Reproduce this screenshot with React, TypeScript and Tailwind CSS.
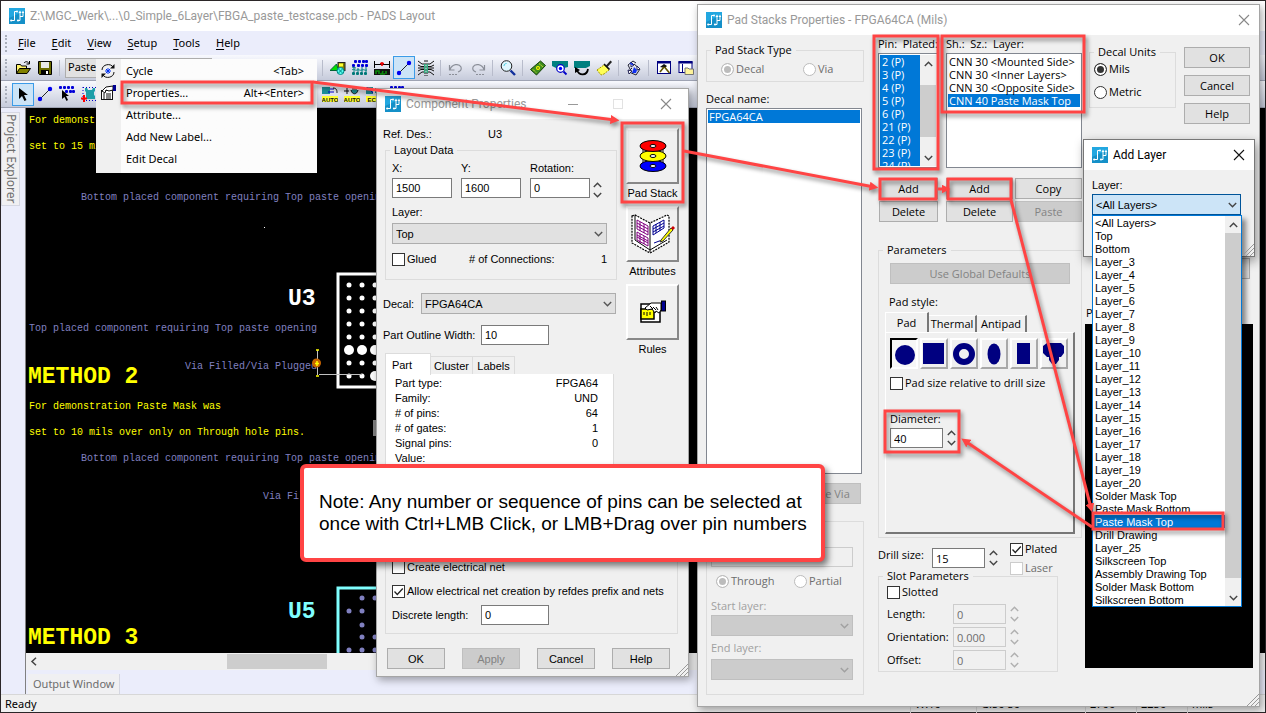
import type { ReactNode } from "react";
import clsx from "clsx";

/* ---------- Icons ---------- */

function Svg({ size = 16, children }: { size?: number; children: ReactNode }) {
  return (
    <svg width={size} height={size} viewBox="0 0 16 16" fill="none" className="shrink-0" aria-hidden="true">
      {children}
    </svg>
  );
}

function AppLogo() {
  return (
    <Svg>
      <rect width="16" height="16" fill="#22a7e0" />
      <path d="M0 16V10L16 3v13z" fill="#1590c8" />
      <path d="M2 12.5h3.500V3.500H8M9 12.500h2V5M11 8.500h3V5" stroke="#fff" />
      <circle cx="8" cy="3.500" r="1" fill="#fff" />
      <circle cx="2.200" cy="12.500" r="1.100" fill="#fff" />
      <circle cx="9" cy="12.500" r="1.100" fill="#fff" />
      <path d="M11 2.500L9.500 5h3zM14 2.500L12.700 5h2.600z" fill="#fff" />
    </Svg>
  );
}

function Chevron({ up, color = "#444", size = 9 }: { up?: boolean; color?: string; size?: number }) {
  return (
    <svg width={size} height="6" viewBox="0 0 9 6" fill="none" aria-hidden="true">
      <path d={up ? "M.8 5L4.5 1.3 8.2 5" : "M.8 1l3.7 3.7L8.2 1"} stroke={color} strokeWidth="1.4" />
    </svg>
  );
}

function CloseIcon({ color }: { color: string }) {
  return (
    <svg width="12" height="12" viewBox="0 0 12 12" fill="none" aria-hidden="true">
      <path d="M1 1l10 10M11 1L1 11" stroke={color} strokeWidth="1.1" />
    </svg>
  );
}

const dots = (cols: number[], rows: number[], color: string) =>
  rows.flatMap((y) => cols.map((x) => <rect key={`${x}-${y}`} x={x} y={y} width="3" height="3" rx="1" fill={color} />));

const auto = (label: string) => (
  <text x="8" y="15.5" textAnchor="middle" fontSize="6" fontWeight="700" fontFamily="Liberation Sans, sans-serif" fill="#111">
    {label}
  </text>
);

const icons: Record<string, ReactNode> = {
  open: (
    <>
      <path d="M1.5 13.5v-9h4l1 1.5h5v3" fill="#fff36b" stroke="#000" />
      <path d="M1.5 13.5L4.5 8.5h11l-3.5 5z" fill="#808000" stroke="#000" />
      <path d="M9 3c1.500-2 4-1.500 5 .5M14.500 1v3h-3" stroke="#000" />
    </>
  ),
  save: (
    <>
      <path d="M1.500 1.500h13v13h-12l-1-1z" fill="#6b6b00" stroke="#000" />
      <rect x="4" y="2" width="8" height="6" fill="#e8e8e8" />
      <rect x="4" y="10" width="8" height="4.500" fill="#000" />
      <rect x="9" y="11" width="2" height="3" fill="#fff" />
    </>
  ),
  shapes: (
    <>
      <rect x="8" y="2.500" width="7" height="8" fill="#808000" stroke="#222" />
      <rect x="9" y="3.500" width="4" height="3" fill="#ff3" />
      <path d="M0 10.500L6.500 4l2 6.500z" fill="#00e000" stroke="#063" />
      <circle cx="10.500" cy="11" r="3.500" fill="#5fe" stroke="#088" />
      <path d="M8.500 9l4 4M12.500 9l-4 4" stroke="#088" />
    </>
  ),
  dots: (
    <>
      {dots([2, 6, 10, 13], [0], "#0000d8")}
      {dots([0, 5, 9, 13], [4], "#0000d8")}
      {dots([0, 4, 8, 12], [12], "#007878")}
      <path d="M0 7l4 1M0 10c2-2 3 1 5 0s3 1 5 0 3 1 5 0M2 8v4M6 8v4M10 7v5M14 7v5" stroke="#008080" />
    </>
  ),
  measure: (
    <>
      <path d="M.5 1v7M15.500 1v7M0 4.500h16" stroke="#000" />
      <path d="M8 2v4M6 3.500h4" stroke="#e00" strokeWidth="1.600" />
      <rect x="0" y="9" width="16" height="6" fill="#111" />
      <path d="M2 14v-3h3v3M8 14l1-3M12 11v3M6 14h5" stroke="#0a8a0a" strokeWidth="1.600" />
    </>
  ),
  track: (
    <>
      <path d="M3 13L13 3" stroke="#222" />
      <circle cx="3" cy="13" r="2.200" fill="#0000f0" />
      <circle cx="13" cy="3" r="2.200" fill="#0000f0" />
    </>
  ),
  fanout: (
    <>
      <path d="M0 1l4 3h2M0 5l3 1.500h3M0 8h6M0 11l3-1.500h3M0 15l4-3h2M16 1l-4 3h-2M16 5l-3 1.500h-3M16 8h-6M16 11l-3-1.500h-3M16 15l-4-3h-2" stroke="#111" />
      <path d="M7 0v16M9 0v16" stroke="#111" strokeDasharray="2 1" />
      <rect x="6" y="4" width="1.500" height="9" fill="#30b080" />
      <rect x="8.500" y="4" width="1.500" height="9" fill="#30b080" />
    </>
  ),
  undo: (
    <>
      <path d="M1.500 5v5h5M2 9.500C4 4 11 3 13 7c1 3-1 4.500-3 5" stroke="#8b8f99" strokeWidth="1.200" />
      <path d="M1 14.500h9" stroke="#8b8f99" strokeDasharray="2 1" />
    </>
  ),
  redo: (
    <>
      <path d="M14.500 5v5h-5M14 9.500C12 4 5 3 3 7c-1 3 1 4.500 3 5" stroke="#8b8f99" strokeWidth="1.200" />
      <path d="M6 14.500h9" stroke="#8b8f99" strokeDasharray="2 1" />
    </>
  ),
  zoom: (
    <>
      <path d="M10.500 10.500l4.500 4.500" stroke="#12309b" strokeWidth="2.400" />
      <circle cx="6.500" cy="6" r="5.300" fill="#dff7ff" stroke="#222" />
      <path d="M4 6c0-1.500 1-2.500 2.500-2.500" stroke="#4cd" />
    </>
  ),
  board: (
    <>
      <path d="M.5 9.500L10.500 1l5 4.500-9 9.500z" fill="#3f8f1e" stroke="#143f0a" />
      <path d="M3 9.500l3 3M9 3.500l4 3.500" stroke="#e8e23c" strokeDasharray="2 1" />
      <circle cx="8" cy="8" r="2" fill="#ff0" />
      <circle cx="8" cy="8" r=".8" fill="#143f0a" />
    </>
  ),
  view: (
    <>
      <path d="M0 1h16v6l-4 1H4L0 6z" fill="#008080" />
      <circle cx="8.500" cy="8.500" r="3.800" fill="#fff" stroke="#0000c8" strokeWidth="1.200" />
      <circle cx="8.500" cy="8.500" r="1.700" fill="#00f" />
      <path d="M11.500 11.500l3 3" stroke="#0000c8" strokeWidth="1.800" />
    </>
  ),
  redraw: (
    <>
      <path d="M0 1h16v5l-4 2H0z" fill="#008080" />
      <path d="M3 10c2 6 10 6 11-1" stroke="#000" strokeWidth="1.800" />
      <path d="M1 13V7l5 3z" fill="#000" />
    </>
  ),
  brush: (
    <>
      <path d="M10 5.500l4.500-5 1.500 1.500-4.500 5z" fill="#222" />
      <path d="M1 10l7-5 5 5-5 4-3 1z" fill="#ffff55" stroke="#a89b00" strokeDasharray="2 1" />
      <path d="M8 4l5.500 5.500" stroke="#111" strokeWidth="1.600" />
    </>
  ),
  cluster: (
    <>
      <path d="M2 5l5-4 3 2M14 9l-4 6-7-3M2 5l3 6M8 4l6 5M6 8l-4 4" stroke="#223" />
      <path d="M5 2l3 3-3 2zM11 6l3 3-3 1zM2 10l4 1-3 3z" fill="#fff" stroke="#225" />
      <path d="M8 7l3 3-1 3H6z" fill="#1030f0" />
      <path d="M4 3l3 2" stroke="#1030f0" strokeWidth="1.500" />
    </>
  ),
  hammer: (
    <>
      <rect x="1.500" y="1.500" width="13" height="12" fill="#fff" stroke="#000080" />
      <path d="M1 2.500h14" stroke="#000080" strokeWidth="2" />
      <path d="M4 7l4-3 3 2-2 2z" fill="#111" />
      <path d="M8.500 7l5 6M8 7l-4 5" stroke="#5f5300" strokeWidth="1.600" />
    </>
  ),
  windowIcon: (
    <>
      <rect x="1" y="1.500" width="13" height="11" fill="#fff" stroke="#000080" />
      <path d="M.5 2.500h14" stroke="#000080" strokeWidth="2" />
      <path d="M4.500 4v9" stroke="#000080" />
      <path d="M7 8h3l1 1h4.500v5.500H7z" fill="#fff49b" stroke="#777" />
    </>
  ),
  select: <path d="M4 2v11l3-3 2.500 5 2-1-2.500-5h4z" fill="#000" />,
  selectDots: (
    <>
      {dots([0, 4, 8, 12], [0], "#0000d8")}
      {dots([6, 10, 13], [4], "#0000d8")}
      <path d="M3 4v9l2.500-2 2 4 1.500-1-2-4h3z" fill="#000" />
    </>
  ),
  addPart: (
    <>
      <path d="M4 2h2l1 2h4l1-2h2v3l-1 1v3l1 1v3H5V6L4 5z" fill="#1d9fa8" />
      <path d="M2 1v13M15.500 1v13M2 1.500h14M5 14.500h11" stroke="#0000c8" strokeDasharray="1 2" />
      <path d="M3 9v7M0 12.500h6" stroke="#f00" strokeWidth="2" />
    </>
  ),
  autoPlace: (
    <>
      <path d="M0 1h8v7H0z" fill="#1d8f98" />
      <path d="M8 3h4M6 6h6" stroke="#00c" />
      <path d="M11 2c4 0 4 3 4 5" stroke="#111" />
      <rect x="0" y="10" width="16" height="6" fill="#ffff30" />
      {auto("AUTO")}
    </>
  ),
  autoRoute: (
    <>
      <path d="M0 5h5M3 2v6M8 3h5" stroke="#111" />
      <path d="M7 4c1 5 6 5 7 0" fill="#1d8f98" stroke="#111" />
      <rect x="0" y="10" width="16" height="6" fill="#ffff30" />
      {auto("AUTO")}
    </>
  ),
  eco: (
    <>
      <path d="M0 1h7v7H0zM9 2h5v5H9z" fill="#1d8f98" />
      <path d="M1 1l6 6" stroke="#00c" />
      <rect x="0" y="10" width="16" height="6" fill="#ffff30" />
      {auto("ECO")}
    </>
  ),
  cycle: (
    <>
      <path d="M2 7c0-6 9-7 11-3M14 9c0 6-9 7-11 3" stroke="#111" />
      <path d="M14.500 1v4.500H10zM1.500 15v-4.500H6z" fill="#111" />
      <path d="M8 5v6M5 8h6M6 6l4 4M10 6l-4 4" stroke="#0030f0" />
    </>
  ),
  properties: (
    <>
      <rect x="1.500" y="5.500" width="11" height="9" fill="#fff" stroke="#111" />
      <path d="M3 9h2M6 9h5M3 11h2M6 11h5M3 13h2M6 13h5" stroke="#111" />
      <path d="M2 6l4-4 7-1v4l-4 1-3-1-1 3z" fill="#fff" stroke="#111" />
      <rect x="13" y="0" width="3" height="6" fill="#000090" />
    </>
  ),
};

function Icon({ name }: { name: string }) {
  return <Svg>{icons[name]}</Svg>;
}

function DiscsIcon() {
  return (
    <svg width="30" height="34" viewBox="0 0 30 34" aria-hidden="true">
      <path d="M5 6v21M25 6v21" stroke="#111" />
      {[
        ["#00f", 27],
        ["#ff0", 17],
        ["#f00", 7],
      ].map(([color, y]) => (
        <g key={color} stroke="#000">
          <ellipse cx="15" cy={y} rx="13" ry="5.500" fill={color as string} />
          <ellipse cx="15" cy={y} rx="3" ry="1.500" fill="#fff" />
        </g>
      ))}
    </svg>
  );
}

function BookIcon() {
  return (
    <svg width="44" height="40" viewBox="0 0 44 40" fill="none" aria-hidden="true">
      <path d="M1 2l3-1 15 8L36 1l2 1v26L19 39 1 29z" fill="#fff" stroke="#000" strokeWidth="1.200" strokeDasharray="2 1" />
      <path d="M19 9v29M4 1v25l15 10 17-10" stroke="#000" />
      <path d="M6 6l11 6v9L6 15zM6 18l11 6v8L6 26zM6 9l11 6M6 12l11 6M6 21l11 6M6 23l11 6M9 8v9M13 10v9M9 20v9M13 22v8" stroke="#800080" />
      <path d="M22 12l11-6v8l-11 7zM22 15l11-6M22 18l11-6M25 10v9M29 8v9M23 29l8-3" stroke="#000090" />
      <path d="M30 26l10-12 2 2-10 11-3 1z" fill="#ff0" stroke="#333" />
      <path d="M40 14l2-2 2 2-2 2z" fill="#c00" />
    </svg>
  );
}

function RulesIcon() {
  return (
    <svg width="26" height="24" viewBox="0 0 26 24" fill="none" aria-hidden="true">
      <path d="M1 4h19v18H1z" fill="#fff" stroke="#000" strokeWidth="1.500" />
      <rect x="1" y="9" width="13" height="10" fill="#ff0" stroke="#000" strokeWidth="1.500" />
      <path d="M4 12v3M7 12v4M10 12v3" stroke="#000" />
      <path d="M5 8l6-5h10v7l-2 3-3-2-1 2-3-4-5 1z" fill="#fff" stroke="#000" />
      <path d="M10 6l3 3M13 7l3 3M16 7l2 3" stroke="#000" />
      <rect x="21.500" y="1" width="4" height="10" fill="#000090" stroke="#000" />
    </svg>
  );
}

/* ---------- Controls ---------- */

function Button({ children, disabled, className }: { children?: ReactNode; disabled?: boolean; className?: string }) {
  return (
    <button
      type="button"
      disabled={disabled}
      className={clsx(
        "flex h-[21px] items-center justify-center border",
        disabled ? "border-[#bfbfbf] bg-[#cccccc] text-[#838383]" : "border-[#adadad] bg-[#e1e1e1]",
        className,
      )}
    >
      {children}
    </button>
  );
}

function TextBox({ id, value, label, disabled, className }: { id?: string; value: string; label?: string; disabled?: boolean; className?: string }) {
  return (
    <input
      id={id}
      type="text"
      aria-label={label}
      defaultValue={value}
      disabled={disabled}
      className={clsx(
        "h-5 min-w-0 border px-[3px]",
        disabled ? "border-[#cccccc] bg-[#f0f0f0] text-[#6d6d6d]" : "border-[#7a7a7a] bg-white",
        className,
      )}
    />
  );
}

function Combo({ id, value, disabled, className }: { id: string; value?: string; disabled?: boolean; className?: string }) {
  return (
    <div className={clsx("relative", className)}>
      <select
        id={id}
        disabled={disabled}
        className={clsx(
          "block h-[21px] w-full appearance-none border pl-[3px]",
          disabled ? "border-[#bfbfbf] bg-[#cccccc]" : "border-[#adadad] bg-[#e1e1e1]",
        )}
      >
        <option>{value}</option>
      </select>
      <span className="pointer-events-none absolute right-1 top-2">
        <Chevron color={disabled ? "#a0a0a0" : "#555"} />
      </span>
    </div>
  );
}

function Check({ label, checked, disabled }: { label: string; checked?: boolean; disabled?: boolean }) {
  return (
    <label className={clsx("flex h-3.5 items-center gap-0.5", disabled && "text-[#6d6d6d]")}>
      <span className="relative size-[13px]">
        <input
          type="checkbox"
          defaultChecked={checked}
          disabled={disabled}
          className="block size-[13px] appearance-none border border-[#333] bg-white disabled:border-[#cccccc]"
        />
        {checked && (
          <svg className="pointer-events-none absolute inset-0" width="13" height="13" viewBox="0 0 13 13" fill="none">
            <path d="M2.500 6.500l2.800 3L10.800 3.500" stroke="#222" strokeWidth="1.300" />
          </svg>
        )}
      </span>
      {label}
    </label>
  );
}

function Radio({ name, label, checked, disabled }: { name: string; label: string; checked?: boolean; disabled?: boolean }) {
  return (
    <label className={clsx("flex h-3.5 items-center gap-0.5", disabled && "text-[#6d6d6d]")}>
      <input
        type="radio"
        name={name}
        defaultChecked={checked}
        disabled={disabled}
        className="size-[13px] appearance-none rounded-full border border-[#333] bg-white checked:bg-[#333] checked:shadow-[inset_0_0_0_2px_white] disabled:border-[#bcbcbc] disabled:checked:bg-[#bcbcbc]"
      />
      {label}
    </label>
  );
}

function Spinner({ disabled }: { disabled?: boolean }) {
  return (
    <span className="flex flex-col gap-1">
      <button type="button" aria-label="Increase" disabled={disabled}>
        <Chevron up color={disabled ? "#b0b0b0" : "#444"} />
      </button>
      <button type="button" aria-label="Decrease" disabled={disabled}>
        <Chevron color={disabled ? "#b0b0b0" : "#444"} />
      </button>
    </span>
  );
}

function Group({ title, className, bodyClass, children }: { title?: string; className?: string; bodyClass?: string; children: ReactNode }) {
  return (
    <fieldset className={clsx("min-w-0 border border-[#dcdcdc]", className)}>
      {title && <legend className="ml-1 h-3.5 px-1">{title}</legend>}
      <div className={bodyClass}>{children}</div>
    </fieldset>
  );
}

function ScrollTrack({ thumb }: { thumb: string }) {
  return (
    <div className="flex w-4 shrink-0 flex-col items-center bg-[#f0f0f0]">
      <span className="flex h-[17px] shrink-0 items-center">
        <Chevron up />
      </span>
      <div className="flex w-full flex-1 flex-col">
        <div className={clsx("w-full bg-[#cdcdcd]", thumb)} />
      </div>
      <span className="flex h-[17px] shrink-0 items-center">
        <Chevron />
      </span>
    </div>
  );
}

function ResizeGrip() {
  return (
    <svg className="absolute bottom-0 right-0" width="12" height="12" viewBox="0 0 12 12" aria-hidden="true">
      <path d="M0 12L12 0M4 12l8-8M8 12l4-4" stroke="#999" />
    </svg>
  );
}

function DialogTitle({ title, active, children }: { title: string; active?: boolean; children?: ReactNode }) {
  return (
    <header
      className={clsx(
        "flex h-[30px] shrink-0 items-center gap-[5px] bg-white px-2 font-[Roboto,'Open_Sans',sans-serif] text-[12px]",
        active ? "text-black" : "text-[#999999]",
      )}
    >
      <AppLogo />
      <h2 className="flex-1 whitespace-nowrap">{title}</h2>
      {children}
      <button type="button" aria-label="Close" className={children ? "mr-2" : "mr-px"}>
        <CloseIcon color={active ? "#111" : "#888"} />
      </button>
    </header>
  );
}

/* ---------- Main window ---------- */

function ToolButton({ name, active }: { name: string; active?: boolean }) {
  return (
    <button
      type="button"
      aria-label={name}
      className={clsx("flex h-[21px] w-5 shrink-0 items-center justify-center", active && "bg-[#cce4f7] outline outline-[#3b9be8]")}
    >
      <Icon name={name} />
    </button>
  );
}

function Grip() {
  return <span className="ml-1 mr-1 h-[17px] w-0 shrink-0 border-l-2 border-dotted border-[#a9aebb]" />;
}

function Separator() {
  return <span className="ml-0.5 mr-[3px] h-4 w-px shrink-0 bg-[#b8bccb]" />;
}

const menus = ["File", "Edit", "View", "Setup", "Tools", "Help"];

function Toolbars() {
  return (
    <>
      <div className="flex h-[26px] shrink-0 items-center gap-0.5 border-b border-[#9ea3b3] bg-linear-to-b from-[#f8f9fe] to-[#c6cbdb]">
        <Grip />
        <ToolButton name="open" />
        <ToolButton name="save" />
        <Separator />
        <select aria-label="Layer" className="h-5 w-[147px] shrink-0 appearance-none border border-[#adadad] bg-[#e1e1e1] pl-0.5 text-[11px]">
          <option>Paste Mask Top</option>
        </select>
        <span className="w-[104px] shrink-0" />
        <Separator />
        <ToolButton name="shapes" />
        <ToolButton name="dots" />
        <ToolButton name="measure" />
        <ToolButton name="track" active />
        <ToolButton name="fanout" />
        <Separator />
        <ToolButton name="undo" />
        <ToolButton name="redo" />
        <Separator />
        <ToolButton name="zoom" />
        <Separator />
        <ToolButton name="board" />
        <ToolButton name="view" />
        <ToolButton name="redraw" />
        <ToolButton name="brush" />
        <Separator />
        <ToolButton name="cluster" />
        <Separator />
        <ToolButton name="hammer" />
        <ToolButton name="windowIcon" />
      </div>
      <div className="flex h-[27px] shrink-0 items-center gap-0.5 border-b border-[#9ea3b3] bg-linear-to-b from-[#f8f9fe] to-[#c6cbdb]">
        <Grip />
        <ToolButton name="select" active />
        <ToolButton name="track" />
        <ToolButton name="selectDots" />
        <ToolButton name="addPart" />
        <span className="w-[217px] shrink-0" />
        <ToolButton name="autoPlace" />
        <ToolButton name="autoRoute" />
        <ToolButton name="eco" />
        <ToolButton name="dots" />
      </div>
    </>
  );
}

const boardNotes = [
  { x: 3, y: 15, color: "#ffff00", text: "For demonstration Paste Mask was" },
  { x: 3, y: 41, color: "#ffff00", text: "set to 15 mils over only on Through hole pins." },
  { x: 55, y: 92, color: "#8080c0", text: "Bottom placed component requiring Top paste opening" },
  { x: 3, y: 223, color: "#8080c0", text: "Top placed component requiring Top paste opening" },
  { x: 159, y: 261, color: "#8080c0", text: "Via Filled/Via Plugged" },
  { x: 3, y: 301, color: "#ffff00", text: "For demonstration Paste Mask was" },
  { x: 3, y: 327, color: "#ffff00", text: "set to 10 mils over only on Through hole pins." },
  { x: 55, y: 353, color: "#8080c0", text: "Bottom placed component requiring Top paste opening" },
  { x: 237, y: 391, color: "#8080c0", text: "Via Filled/Via Plugged" },
];

const boardTitles = [
  { x: 2, y: 275, color: "#ffff00", text: "METHOD 2" },
  { x: 262, y: 197, color: "#ffffff", text: "U3" },
  { x: 262, y: 510, color: "#80ffff", text: "U5" },
  { x: 2, y: 536, color: "#ffff00", text: "METHOD 3" },
];

const padCols = [323, 336, 349];
const smallPadRows = [177, 190, 203, 216, 229, 255];
const viaPads = [[336, 490], [349, 490], [323, 503], [336, 503], [336, 517], [336, 529], [349, 529], [323, 542], [336, 542], [349, 542]];

function BoardCanvas() {
  return (
    <svg className="min-h-0 w-full flex-1 bg-black" fontFamily="'Liberation Mono', monospace">
      {boardNotes.map((n) => (
        <text key={n.y} x={n.x} y={n.y} fill={n.color} fontSize="10">
          {n.text}
        </text>
      ))}
      {boardTitles.map((t) => (
        <text key={t.y} x={t.x} y={t.y} fill={t.color} fontSize="23" fontWeight="700">
          {t.text}
        </text>
      ))}
      <rect x="312" y="166" width="160" height="113" fill="none" stroke="#fff" strokeWidth="3" />
      {smallPadRows.flatMap((y) => padCols.map((x) => <circle key={`${x}-${y}`} cx={x} cy={y} r="2.500" fill="#fff" />))}
      {padCols.map((x) => (
        <circle key={x} cx={x} cy="242" r="5" fill="#fff" />
      ))}
      <circle cx="323" cy="268" r="2.500" fill="#fff" />
      <circle cx="336" cy="268" r="2.500" fill="#fff" />
      <circle cx="349" cy="268" r="5" fill="#fff" />
      <path d="M291.500 242v25M293 266.500h43" stroke="#c0c0c0" />
      <circle cx="290.500" cy="255" r="4.500" fill="#c86400" />
      <path d="M289 255.500h4M291 253v5M290 242h3M290 268h3" stroke="#ff0" strokeWidth="1.500" />
      <rect x="238" y="119" width="1" height="1" fill="#fff" />
      <rect x="347" y="312" width="6" height="16" fill="#808080" />
      <rect x="312" y="480" width="160" height="113" fill="none" stroke="#80ffff" strokeWidth="3" />
      {viaPads.map(([x, y]) => (
        <circle key={`${x}-${y}`} cx={x} cy={y} r="2.500" fill="#8080c0" />
      ))}
    </svg>
  );
}

function MainWindow() {
  return (
    <div className="flex h-full flex-col border border-[#2b2628] bg-[#ebedfb] font-['Noto_Sans','Open_Sans',sans-serif]">
      <header className="flex h-[30px] shrink-0 items-center gap-[5px] bg-white pl-2 font-[Roboto,'Open_Sans',sans-serif] text-[12px] text-[#999999]">
        <AppLogo />
        <h1>Z:\MGC_Werk\...\0_Simple_6Layer\FBGA_paste_testcase.pcb - PADS Layout</h1>
      </header>
      <nav className="flex h-6 shrink-0 items-center text-[11px]">
        <Grip />
        <div className="flex gap-4 pl-[7px]">
          {menus.map((m) => (
            <button key={m} type="button">
              <span className="underline underline-offset-2">{m[0]}</span>
              {m.slice(1)}
            </button>
          ))}
        </div>
      </nav>
      <Toolbars />
      <div className="flex min-h-0 flex-1">
        <aside className="w-6 shrink-0 pt-1">
          <button
            type="button"
            className="flex h-[94px] w-[19px] items-center justify-center border border-[#d5d7e2] bg-[#f0f0f2] text-[12px] text-[#6d6d6d] [writing-mode:vertical-rl]"
          >
            Project Explorer
          </button>
        </aside>
        <div className="flex min-w-0 flex-1 flex-col border-l border-[#808080]">
          <BoardCanvas />
          <div className="flex h-[17px] shrink-0 items-center bg-[#f0f0f0]">
            <svg className="ml-1" width="7" height="9" viewBox="0 0 7 9" fill="none" aria-hidden="true">
              <path d="M6 .8L2 4.500l4 3.700" stroke="#444" strokeWidth="1.500" />
            </svg>
            <div className="ml-[190px] h-[15px] w-[100px] bg-[#cdcdcd]" />
          </div>
          <div className="flex h-6 shrink-0 items-end bg-[#ebedfb] pl-0.5">
            <button type="button" className="h-5 border-r border-[#d5d7e2] bg-[#f0f0f2] px-[5px] text-[11px] text-[#6d6d6d]">
              Output Window
            </button>
          </div>
        </div>
      </div>
      <footer className="flex h-[18px] shrink-0 items-center border-t border-[#d7d7d7] bg-[#f0f0f0] pl-1 pt-0.5 text-[11px]">
        <span className="flex-1">Ready</span>
        <span className="w-[66px] border-l border-[#d7d7d7] pl-1">W:10</span>
        <span className="w-[109px] border-l border-[#d7d7d7] pl-1">G:50 50</span>
        <span className="w-[51px] border-l border-[#d7d7d7] pl-1">2700</span>
        <span className="w-[51px] border-l border-[#d7d7d7] pl-1">2250</span>
        <span className="w-[78px] border-l border-[#d7d7d7] pl-1">mils</span>
      </footer>
    </div>
  );
}

const contextItems = [
  { label: "Cycle", shortcut: "<Tab>", icon: "cycle" },
  { label: "Properties...", shortcut: "Alt+<Enter>", icon: "properties" },
  { label: "Attribute..." },
  { label: "Add New Label..." },
  { label: "Edit Decal" },
];

function ContextMenu() {
  return (
    <ul
      role="menu"
      className="absolute left-24 top-[59px] w-[221px] bg-linear-to-r from-[#f0f0f0] from-[25px] to-[#fcfcfc] to-[25px] pb-[3px] pt-px font-['Noto_Sans','Open_Sans',sans-serif] text-[11px]"
    >
      {contextItems.map((item) => (
        <li key={item.label} role="none">
          <button type="button" role="menuitem" className="flex h-[22px] w-full items-center pr-[13px]">
            <span className="flex w-[30px] pl-1">{item.icon && <Icon name={item.icon} />}</span>
            <span>{item.label}</span>
            <span className="ml-auto">{item.shortcut}</span>
          </button>
        </li>
      ))}
    </ul>
  );
}

/* ---------- Component Properties ---------- */

const partFacts = [
  ["Part type:", "FPGA64"],
  ["Family:", "UND"],
  ["# of pins:", "64"],
  ["# of gates:", "1"],
  ["Signal pins:", "0"],
  ["Value:", ""],
];

function BigButton({ label, children }: { label: string; children: ReactNode }) {
  return (
    <button type="button" className="flex w-[53px] flex-col items-center gap-0.5">
      <span className="flex h-14 w-[53px] items-center justify-center border-2 border-b-[#888] border-l-white border-r-[#888] border-t-white">
        {children}
      </span>
      <span className="whitespace-nowrap">{label}</span>
    </button>
  );
}

function ComponentProperties() {
  return (
    <section className="absolute left-[376px] top-[88px] w-[313px] border border-[#a5a5a5] bg-[#f0f0f0] font-['Liberation_Sans',Arial,sans-serif] text-[11px] leading-[14px] shadow-[2px_3px_8px_rgba(0,0,0,0.35)]">
      <DialogTitle title="Component Properties">
        <button type="button" aria-label="Minimize" className="mr-[30px] h-px w-2.5 bg-[#999]" />
        <button type="button" aria-label="Maximize" className="mr-8 size-2.5 border border-[#e2e2e2]" />
      </DialogTitle>
      <div className="flex gap-[9px] pl-1.5">
        <div className="w-[234px] pt-2">
          <div className="flex">
            <span className="w-[105px]">Ref. Des.:</span>
            <span>U3</span>
          </div>
          <Group title="Layout Data" className="ml-0.5 mt-0.5" bodyClass="px-1.5 pb-[13px]">
            <div className="flex items-end gap-[9px] pt-1">
              <div className="flex w-[60px] flex-col gap-[3px]">
                <label htmlFor="pos-x">X:</label>
                <TextBox id="pos-x" value="1500" />
              </div>
              <div className="flex w-[60px] flex-col gap-[3px]">
                <label htmlFor="pos-y">Y:</label>
                <TextBox id="pos-y" value="1600" />
              </div>
              <div className="flex w-[60px] flex-col gap-[3px]">
                <label htmlFor="rotation">Rotation:</label>
                <TextBox id="rotation" value="0" />
              </div>
              <span className="-ml-1.5">
                <Spinner />
              </span>
            </div>
            <label htmlFor="layer" className="mt-[7px] block">
              Layer:
            </label>
            <Combo id="layer" value="Top" className="mt-1 w-[215px]" />
            <div className="mt-2 flex w-[215px] items-center">
              <span className="w-[77px]">
                <Check label="Glued" />
              </span>
              <span className="flex-1"># of Connections:</span>
              <span>1</span>
            </div>
          </Group>
          <div className="mt-[13px] flex items-center">
            <label htmlFor="decal" className="w-[38px]">
              Decal:
            </label>
            <Combo id="decal" value="FPGA64CA" className="w-[195px]" />
          </div>
          <div className="mt-[11px] flex items-center">
            <label htmlFor="outline" className="w-[98px]">
              Part Outline Width:
            </label>
            <TextBox id="outline" value="10" className="w-[68px]" />
          </div>
          <div className="ml-0.5 mt-2 flex items-end" role="tablist">
            <button type="button" role="tab" aria-selected="true" className="-mb-px h-[22px] w-[46px] border border-b-0 border-[#dcdcdc] bg-white pr-3">
              Part
            </button>
            <button type="button" role="tab" className="h-[18px] w-[42px] border border-b-0 border-l-0 border-[#dcdcdc]">
              Cluster
            </button>
            <button type="button" role="tab" className="h-[18px] w-[42px] border border-b-0 border-l-0 border-[#dcdcdc]">
              Labels
            </button>
          </div>
          <div className="ml-0.5 h-[166px] w-[229px] border border-t-0 border-[#dcdcdc] bg-white px-[9px] pt-0.5">
            <dl className="grid w-[203px] grid-cols-2 leading-[15px]">
              {partFacts.map(([k, v]) => (
                <div key={k} className="contents">
                  <dt>{k}</dt>
                  <dd className="text-right">{v}</dd>
                </div>
              ))}
            </dl>
          </div>
        </div>
        <div className="flex flex-col gap-1.5 pt-[9px]">
          <BigButton label="Pad Stack">
            <DiscsIcon />
          </BigButton>
          <BigButton label="Attributes">
            <BookIcon />
          </BigButton>
          <BigButton label="Rules">
            <RulesIcon />
          </BigButton>
        </div>
      </div>
      <Group className="ml-2 mr-2.5 mt-1" bodyClass="flex flex-col gap-2.5 px-1.5 pb-2 pt-[15px]">
        <Check label="Create electrical net" />
        <Check label="Allow electrical net creation by refdes prefix and nets" checked />
        <div className="-mt-[3px] flex items-center">
          <label htmlFor="discrete" className="w-[89px]">
            Discrete length:
          </label>
          <TextBox id="discrete" value="0" className="w-[68px]" />
        </div>
      </Group>
      <div className="flex gap-[17px] px-2.5 pb-[7px] pt-3.5">
        <Button className="w-[58px]">OK</Button>
        <Button className="w-[58px]" disabled>
          Apply
        </Button>
        <Button className="w-[58px]">Cancel</Button>
        <Button className="w-[58px]">Help</Button>
      </div>
      <ResizeGrip />
    </section>
  );
}

/* ---------- Pad Stacks Properties ---------- */

const pins = ["2 (P)", "3 (P)", "4 (P)", "5 (P)", "6 (P)", "21 (P)", "22 (P)", "23 (P)", "24 (P)"];
const stackLayers = ["CNN 30 <Mounted Side>", "CNN 30 <Inner Layers>", "CNN 30 <Opposite Side>", "CNN 40 Paste Mask Top"];

const padShapes = [
  { name: "Round", shape: <circle cx="12" cy="12" r="10" /> },
  { name: "Square", shape: <rect width="21" height="21" /> },
  { name: "Annular", shape: <circle cx="11" cy="11" r="8" fill="none" stroke="#000080" strokeWidth="6" /> },
  { name: "Oval", shape: <ellipse cx="11" cy="11" rx="6.500" ry="10.500" /> },
  { name: "Rectangular", shape: <rect x="4" width="13" height="21" /> },
  { name: "Odd", shape: <path d="M4 0h14l3 3v7l-3 4h-2v3l-3 4H9l-3-4v-3H4l-4-4V3z" /> },
];

function PadStackLeft() {
  return (
    <div className="w-[158px] shrink-0">
      <Group title="Pad Stack Type" className="mt-2" bodyClass="flex pb-[5px] pl-3.5 pt-[5px]">
        <span className="w-[82px]">
          <Radio name="stack-type" label="Decal" checked disabled />
        </span>
        <Radio name="stack-type" label="Via" disabled />
      </Group>
      <div className="mt-2.5">Decal name:</div>
      <ul role="listbox" aria-label="Decal name" className="mt-0.5 h-[366px] w-[156px] border border-[#828790] bg-white p-px">
        <li role="option" aria-selected="true" className="h-[13px] bg-[#0078d7] pl-px leading-[13px] text-white">
          FPGA64CA
        </li>
      </ul>
      <Button disabled className="ml-[81px] mt-[9px] w-[74px]">
        Delete Via
      </Button>
      <Group className="mt-[17px]" bodyClass="flex flex-col pb-3.5 pl-1 pr-2.5 pt-[25px]">
        <TextBox value="" label="Name" disabled />
        <div className="mt-[7px] flex pl-[5px]">
          <span className="w-[78px]">
            <Radio name="via-type" label="Through" checked disabled />
          </span>
          <Radio name="via-type" label="Partial" disabled />
        </div>
        <label htmlFor="start-layer" className="mt-[11px] text-[#a0a0a0]">
          Start layer:
        </label>
        <Combo id="start-layer" disabled className="mt-0.5" />
        <label htmlFor="end-layer" className="mt-[5px] text-[#a0a0a0]">
          End layer:
        </label>
        <Combo id="end-layer" disabled className="mt-1" />
      </Group>
    </div>
  );
}

function PadStackMiddle() {
  return (
    <div className="w-[204px] shrink-0 pt-0.5">
      <div className="flex gap-2">
        <div className="w-[60px]">
          <div className="whitespace-nowrap">Pin:&nbsp; Plated:</div>
          <div className="mt-0.5 flex h-[115px] overflow-hidden border border-[#828790] bg-white p-px">
            <ul role="listbox" aria-label="Pins" className="min-w-0 flex-1 overflow-hidden">
              {pins.map((p) => (
                <li key={p} role="option" aria-selected="true" className="h-[13px] whitespace-nowrap bg-[#0078d7] pl-0.5 leading-[13px] text-white">
                  {p}
                </li>
              ))}
            </ul>
            <ScrollTrack thumb="mt-[13px] h-[52px]" />
          </div>
          <div className="mt-2.5 flex flex-col gap-0.5 pl-px">
            <Button>Add</Button>
            <Button>Delete</Button>
          </div>
        </div>
        <div className="w-[136px]">
          <div>Sh.:&nbsp; Sz.:&nbsp; Layer:</div>
          <ul role="listbox" aria-label="Layers" className="mt-0.5 h-[115px] border border-[#828790] bg-white p-px">
            {stackLayers.map((l, i) => (
              <li
                key={l}
                role="option"
                aria-selected={i === 3}
                className={clsx("h-[13px] whitespace-nowrap pl-px leading-[13px]", i === 3 && "bg-[#0078d7] text-white")}
              >
                {l}
              </li>
            ))}
          </ul>
          <div className="mt-2.5 grid grid-cols-2 gap-0.5">
            <Button>Add</Button>
            <Button>Copy</Button>
            <Button>Delete</Button>
            <Button disabled>Paste</Button>
          </div>
        </div>
      </div>

      <Group title="Parameters" className="mt-[21px]" bodyClass="px-1.5 pb-[3px]">
        <div className="px-[5px] pt-1.5">
          <Button disabled className="w-full">
            Use Global Defaults
          </Button>
        </div>
        <div className="mt-[11px] pl-1">Pad style:</div>
        <div className="mt-[3px] flex items-end" role="tablist">
          <button type="button" role="tab" aria-selected="true" className="h-5 w-11 border-l border-r-2 border-t border-l-white border-r-[#777] border-t-white">
            Pad
          </button>
          <button type="button" role="tab" className="h-[17px] w-12 border-r-2 border-t border-r-[#777] border-t-white">
            Thermal
          </button>
          <button type="button" role="tab" className="h-[17px] w-[50px] border-r-2 border-t border-r-[#777] border-t-white">
            Antipad
          </button>
        </div>
        <div className="h-[202px] border-b-2 border-l border-r-2 border-t border-b-[#777] border-l-white border-r-[#777] border-t-white pl-1 pt-[5px]">
          <div className="flex gap-0.5">
            {padShapes.map(({ name, shape }, i) => (
              <button
                key={name}
                type="button"
                aria-label={name}
                className={clsx(
                  "flex h-[31px] w-7 items-center justify-center border-2",
                  i === 0 ? "border-b-white border-l-black border-r-white border-t-black bg-[#f7f7f7]" : "border-b-[#a8a8a8] border-l-white border-r-[#a8a8a8] border-t-white",
                )}
              >
                <svg width="22" height="22" viewBox="0 0 22 22" fill="#000080" className="shrink-0" aria-hidden="true">
                  {shape}
                </svg>
              </button>
            ))}
          </div>
          <div className="mt-[7px]">
            <Check label="Pad size relative to drill size" />
          </div>
          <label htmlFor="diameter" className="mt-[22px] block">
            Diameter:
          </label>
          <div className="mt-0.5 flex items-center gap-1">
            <TextBox id="diameter" value="40" className="w-[53px]" />
            <Spinner />
          </div>
        </div>
      </Group>

      <div className="mt-1 flex h-[27px] items-start">
        <label htmlFor="drill" className="w-[54px] whitespace-nowrap pt-1.5">
          Drill size:
        </label>
        <div className="flex items-center gap-1 pt-1.5">
          <TextBox id="drill" value="15" className="w-[53px]" />
          <Spinner />
        </div>
        <div className="ml-3 flex flex-col gap-[5px]">
          <Check label="Plated" checked />
          <Check label="Laser" disabled />
        </div>
      </div>
      <Group title="Slot Parameters" className="w-[180px]" bodyClass="px-2 pb-px pt-0.5">
        <Check label="Slotted" />
        <div className="mt-[5px] flex flex-col gap-[3px]">
          {[
            ["Length:", "0"],
            ["Orientation:", "0.000"],
            ["Offset:", "0"],
          ].map(([label, value]) => (
            <div key={label} className="flex items-center">
              <label htmlFor={label} className="w-[66px]">
                {label}
              </label>
              <TextBox id={label} value={value} disabled className="mr-1 w-[53px]" />
              <Spinner disabled />
            </div>
          ))}
        </div>
      </Group>
    </div>
  );
}

function PadStackRight() {
  return (
    <div className="flex min-w-0 flex-1 flex-col">
      <div className="flex items-start justify-between pl-1 pr-[3px] pt-2.5">
        <Group title="Decal Units" className="w-[87px]" bodyClass="flex flex-col gap-[9px] pb-2 pl-1 pt-[3px]">
          <Radio name="units" label="Mils" checked />
          <Radio name="units" label="Metric" />
        </Group>
        <div className="flex w-[66px] flex-col gap-[7px] pt-0.5">
          <Button>OK</Button>
          <Button>Cancel</Button>
          <Button>Help</Button>
        </div>
      </div>
      <Button className="mr-[3px] mt-[134px] w-[66px] self-end" />
      <div className="mt-[27px] pl-px">Preview:</div>
      <div className="mt-1 h-[344px] bg-black" />
    </div>
  );
}

function PadStackProperties() {
  return (
    <section className="absolute left-[697px] top-1 w-[563px] border border-[#a5a5a5] bg-[#f0f0f0] font-['Open_Sans','Noto_Sans',sans-serif] text-[11px] leading-[14px] shadow-[2px_3px_8px_rgba(0,0,0,0.35)]">
      <DialogTitle title="Pad Stacks Properties - FPGA64CA (Mils)" />
      <div className="flex h-[671px] pl-2 pr-1.5">
        <PadStackLeft />
        <span className="w-3.5 shrink-0" />
        <PadStackMiddle />
        <span className="w-[3px] shrink-0" />
        <PadStackRight />
      </div>
      <ResizeGrip />
    </section>
  );
}

/* ---------- Add Layer ---------- */

const layerOptions = [
  "<All Layers>",
  "Top",
  "Bottom",
  ...Array.from({ length: 18 }, (_, i) => `Layer_${i + 3}`),
  "Solder Mask Top",
  "Paste Mask Bottom",
  "Paste Mask Top",
  "Drill Drawing",
  "Layer_25",
  "Silkscreen Top",
  "Assembly Drawing Top",
  "Solder Mask Bottom",
  "Silkscreen Bottom",
];

function AddLayer() {
  return (
    <section className="absolute left-[1083px] top-[139px] h-[118px] w-[172px] border border-[#777] bg-[#f0f0f0] font-['Liberation_Sans',Arial,sans-serif] text-[11px] leading-[14px] shadow-[2px_4px_10px_rgba(0,0,0,0.4)]">
      <DialogTitle title="Add Layer" active />
      <div className="flex flex-col gap-0.5 px-2 pt-2">
        <label htmlFor="add-layer">Layer:</label>
        <div className="relative w-[149px]">
          <select id="add-layer" className="block h-[21px] w-full appearance-none border border-[#005499] bg-[#cce4f7] pl-[3px]">
            <option>{"<All Layers>"}</option>
          </select>
          <span className="pointer-events-none absolute right-1 top-2">
            <Chevron color="#444" />
          </span>
          <div className="absolute left-0 top-[21px] flex h-[392px] w-[150px] border border-[#0078d7] bg-white shadow-[4px_4px_5px_rgba(0,0,0,0.45)]">
            <ul role="listbox" aria-label="Layer options" className="flex-1">
              {layerOptions.map((o) => (
                <li
                  key={o}
                  role="option"
                  aria-selected={o === "Paste Mask Top"}
                  className={clsx("h-[13px] whitespace-nowrap pl-0.5 leading-[15px]", o === "Paste Mask Top" && "bg-[#0078d7] text-white")}
                >
                  {o}
                </li>
              ))}
            </ul>
            <ScrollTrack thumb="h-[345px]" />
          </div>
        </div>
      </div>
      <ResizeGrip />
    </section>
  );
}

/* ---------- Callouts ---------- */

const callouts = [
  [122, 82, 190, 21],
  [622, 123, 61, 79],
  [874, 36, 64, 133],
  [942, 36, 142, 76],
  [880, 179, 56, 20],
  [948, 179, 63, 20],
  [885, 411, 74, 41],
  [1093, 513, 130, 16],
];

const arrows = [
  "M313 82L615 120",
  "M684 151L874 187",
  "M938 189H946",
  "M1011 200L1091 508",
  "M1092 527L965 441",
];

function Callouts() {
  return (
    <>
      <svg className="pointer-events-none absolute inset-0 size-full drop-shadow-[2px_3px_2px_rgba(0,0,0,0.45)]" fill="none" stroke="#ff4444" strokeWidth="3">
        <defs>
          <marker id="head" viewBox="0 0 8 8" refX="4" refY="4" markerWidth="9" markerHeight="9" markerUnits="userSpaceOnUse" orient="auto">
            <path d="M0 0l8 4-8 4z" fill="#ff4444" stroke="none" />
          </marker>
        </defs>
        {callouts.map(([x, y, w, h]) => (
          <rect key={`${x}-${y}`} x={x} y={y} width={w} height={h} />
        ))}
        {arrows.map((d) => (
          <path key={d} d={d} markerEnd="url(#head)" />
        ))}
      </svg>
      <p className="absolute left-[300px] top-[464px] flex h-[98px] w-[525px] items-center rounded-md border-4 border-[#ff4444] bg-white pl-[15px] font-['Liberation_Sans',Arial,sans-serif] text-[19px] leading-[22px] shadow-[3px_4px_6px_rgba(0,0,0,0.5)]">
        <span className="whitespace-nowrap">
          Note: Any number or sequence of pins can be selected at
          <br />
          once with Ctrl+LMB Click, or LMB+Drag over pin numbers
        </span>
      </p>
    </>
  );
}

export default function App() {
  return (
    <main className="relative h-screen overflow-hidden text-black">
      <MainWindow />
      <ContextMenu />
      <ComponentProperties />
      <PadStackProperties />
      <AddLayer />
      <Callouts />
    </main>
  );
}
